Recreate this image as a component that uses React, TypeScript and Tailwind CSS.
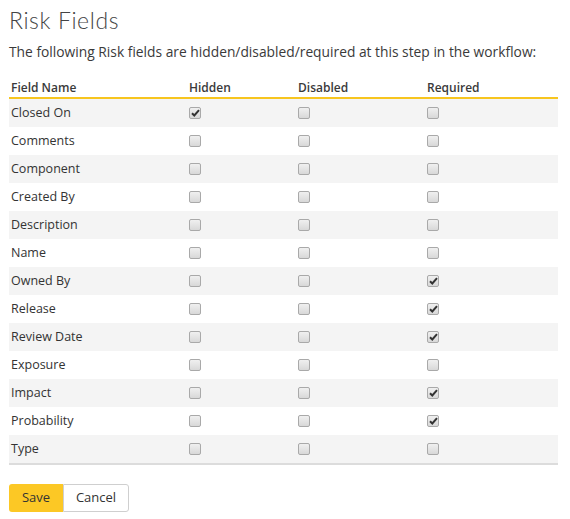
import React from "react";

type Row = { name: string; hidden: boolean; disabled: boolean; required: boolean };

const rows: Row[] = [
  { name: "Closed On", hidden: true, disabled: false, required: false },
  { name: "Comments", hidden: false, disabled: false, required: false },
  { name: "Component", hidden: false, disabled: false, required: false },
  { name: "Created By", hidden: false, disabled: false, required: false },
  { name: "Description", hidden: false, disabled: false, required: false },
  { name: "Name", hidden: false, disabled: false, required: false },
  { name: "Owned By", hidden: false, disabled: false, required: true },
  { name: "Release", hidden: false, disabled: false, required: true },
  { name: "Review Date", hidden: false, disabled: false, required: true },
  { name: "Exposure", hidden: false, disabled: false, required: false },
  { name: "Impact", hidden: false, disabled: false, required: true },
  { name: "Probability", hidden: false, disabled: false, required: true },
  { name: "Type", hidden: false, disabled: false, required: false },
];

// Small grey checkbox like the old webkit style
const Box: React.FC<{ checked: boolean }> = ({ checked }) => (
  <span className="inline-flex w-[12px] h-[12px] items-center justify-center rounded-[2px] border border-[#a9a9a9] bg-gradient-to-b from-[#f0f0f0] to-[#d8d8d8]">
    {checked && (
      <svg width="9" height="8" viewBox="0 0 9 8">
        <path d="M1 4.2 L3.3 6.5 L8 1.2" fill="none" stroke="#333" strokeWidth="2" />
      </svg>
    )}
  </span>
);

const cols = "grid grid-cols-[178px_109px_129px_1fr]";

export default function App() {
  return (
    <div className="px-[9px] pt-[4px] text-[#333] font-['Open_Sans',sans-serif] text-[12.5px]">
      <h1 className="text-[23px] font-light leading-[32px] tracking-[0.6px] text-[#444] font-['Lato',sans-serif]">
        Risk Fields
      </h1>
      <p className="mt-[7px] text-[13.8px] leading-[18px] text-[#3a3a3a]">
        The following Risk fields are hidden/disabled/required at this step in the workflow:
      </p>
      <div className="mt-[18px] w-[549px]">
        <div className={`${cols} h-[20px] items-center border-b-2 border-[#f7c51f] font-semibold text-[12px] text-[#3a3a3a]`}>
          <span className="pl-[2px]">Field Name</span>
          <span className="pl-[2px]">Hidden</span>
          <span className="pl-[2px]">Disabled</span>
          <span className="pl-[2px]">Required</span>
        </div>
        {rows.map((r, i) => (
          <div
            key={r.name}
            className={`${cols} h-[28px] items-center ${i % 2 === 0 ? "bg-[#f4f4f4]" : "bg-white"}`}
          >
            <span className="pl-[2px]">{r.name}</span>
            <span className="pl-[2px] flex"><Box checked={r.hidden} /></span>
            <span className="pl-[2px] flex"><Box checked={r.disabled} /></span>
            <span className="pl-[2px] flex"><Box checked={r.required} /></span>
          </div>
        ))}
        <div className="border-t-2 border-[#dcdcdc]" />
      </div>
      <div className="mt-[19px] flex">
        <button className="h-[28px] w-[54px] rounded-l-[3px] bg-[#fcc825] text-[13px] text-[#333]">Save</button>
        <button className="h-[28px] w-[66px] rounded-r-[3px] border border-[#cfcfcf] bg-white text-[13px] text-[#333]">Cancel</button>
      </div>
    </div>
  );
}
